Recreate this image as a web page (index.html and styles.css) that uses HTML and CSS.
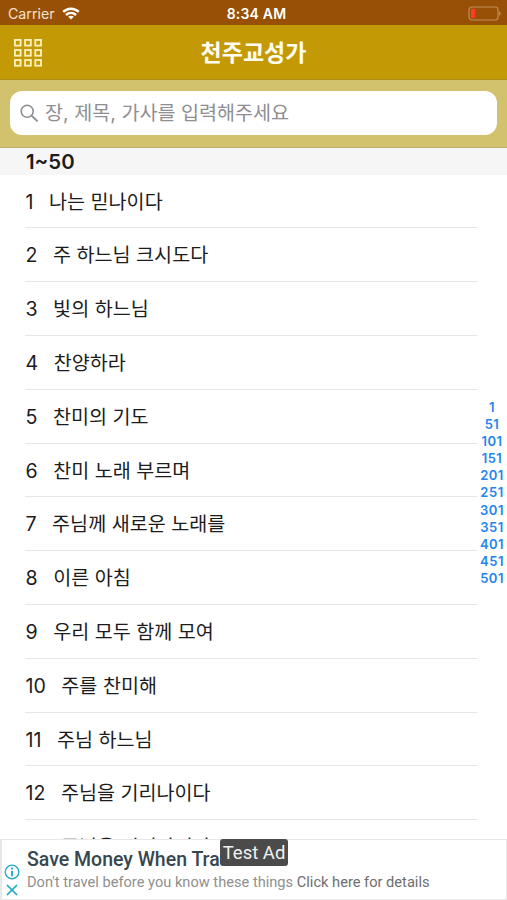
FILE: index.html
```
<!DOCTYPE html>
<html lang="ko">
<head>
  <meta charset="UTF-8">
  <meta name="viewport" content="width=device-width, initial-scale=1.0">
  <title>천주교성가</title>
  <link rel="stylesheet" href="styles.css">
</head>
<body>
  <div class="status-bar">
    <div class="carrier">
      <span>Carrier</span>
      <svg width="18" height="13" viewBox="0 0 18 13" fill="none" stroke="#fff" stroke-width="2.4">
        <path d="M1.2 4.9C5.6.6 12.4.6 16.8 4.9"/>
        <path d="M4 8C6.9 5.3 11.1 5.3 14 8"/>
        <path d="M9 12.6L6.2 9.8C7.8 8.4 10.2 8.4 11.8 9.8Z" fill="#fff" stroke="none"/>
      </svg>
    </div>
    <span class="time">8:34 AM</span>
    <svg class="battery" width="33" height="15" viewBox="0 0 33 15">
      <rect x="1" y="1" width="29" height="13" rx="3" fill="none" stroke="#c08d5c" stroke-width="1.2"/>
      <rect x="3" y="3" width="4.2" height="9" rx="1" fill="#ff3b2a"/>
      <path d="M31 5.3C33.2 6 33.2 9 31 9.7Z" fill="#c08d5c"/>
    </svg>
  </div>

  <header class="nav-bar">
    <svg class="menu" width="28" height="28" viewBox="0 0 28 28" fill="none" stroke="#fff3bd" stroke-width="1.8">
      <rect x="0.9" y="0.9" width="5.7" height="5.7"/>
      <rect x="11.1" y="0.9" width="5.7" height="5.7"/>
      <rect x="21.3" y="0.9" width="5.7" height="5.7"/>
      <rect x="0.9" y="11" width="5.7" height="5.7"/>
      <rect x="11.1" y="11" width="5.7" height="5.7"/>
      <rect x="21.3" y="11" width="5.7" height="5.7"/>
      <rect x="0.9" y="21" width="5.7" height="5.7"/>
      <rect x="11.1" y="21" width="5.7" height="5.7"/>
      <rect x="21.3" y="21" width="5.7" height="5.7"/>
    </svg>
    <h1>천주교성가</h1>
  </header>

  <div class="search-bar">
    <div class="search-field">
      <svg width="19" height="19" viewBox="0 0 19 19" fill="none" stroke="#8e8e93" stroke-width="1.6">
        <circle cx="7.2" cy="7.2" r="6"/>
        <path d="M11.6 11.6L17.6 17.4" stroke-width="2"/>
      </svg>
      <span>장, 제목, 가사를 입력해주세요</span>
    </div>
  </div>

  <main>
    <h2>1~50</h2>
    <ul class="songs">
      <li><span class="no">1</span>나는 믿나이다</li>
      <li><span class="no">2</span>주 하느님 크시도다</li>
      <li><span class="no">3</span>빛의 하느님</li>
      <li><span class="no">4</span>찬양하라</li>
      <li><span class="no">5</span>찬미의 기도</li>
      <li><span class="no">6</span>찬미 노래 부르며</li>
      <li><span class="no">7</span>주님께 새로운 노래를</li>
      <li><span class="no">8</span>이른 아침</li>
      <li><span class="no">9</span>우리 모두 함께 모여</li>
      <li><span class="no">10</span>주를 찬미해</li>
      <li><span class="no">11</span>주님 하느님</li>
      <li><span class="no">12</span>주님을 기리나이다</li>
      <li><span class="no">13</span>주님을 기리나이다</li>
    </ul>
  </main>

  <nav class="index">
    <span>1</span>
    <span>51</span>
    <span>101</span>
    <span>151</span>
    <span>201</span>
    <span>251</span>
    <span>301</span>
    <span>351</span>
    <span>401</span>
    <span>451</span>
    <span>501</span>
  </nav>

  <footer class="ad">
    <div class="ad-icons">
      <svg width="16" height="16" viewBox="0 0 16 16" fill="none" stroke="#1fa9c9" stroke-width="1.3">
        <circle cx="8" cy="8" r="6.8"/>
        <path d="M8 3.6V5.4M8 6.8V12.2" stroke-width="1.8"/>
      </svg>
      <svg width="12" height="12" viewBox="0 0 12 12" fill="none" stroke="#1fa9c9" stroke-width="1.7">
        <path d="M1 1L11 11M11 1L1 11"/>
      </svg>
    </div>
    <div class="ad-text">
      <div class="ad-title">Save Money When Tra</div>
      <div class="ad-desc">Don't travel before you know these things <span>Click here for details</span></div>
    </div>
    <div class="ad-badge">Test Ad</div>
  </footer>
</body>
</html>
```
FILE: styles.css
```
* {
  box-sizing: border-box;
}
body {
  margin: 0;
  height: 900px;
  display: flex;
  flex-direction: column;
  position: relative;
  overflow: hidden;
  background: #fff;
  color: #1c1c1c;
  font-family: Inter, "Noto Sans CJK KR", sans-serif;
}
.status-bar {
  flex: none;
  height: 25px;
  padding: 1px 6px 0 8px;
  display: grid;
  grid-template-columns: 1fr auto 1fr;
  align-items: center;
  background: #984f06;
  color: #fff;
  font-size: 14px;
  line-height: 24px;
}
.carrier {
  display: flex;
  align-items: center;
  gap: 7px;
  color: #f6e3d0;
  font-size: 14.2px;
}
.time {
  padding: 1px 0 0 4px;
  font-weight: 600;
  font-size: 14px;
  letter-spacing: 0.2px;
}
.battery {
  justify-self: end;
}
.nav-bar {
  flex: none;
  height: 55px;
  padding: 0 14px;
  display: grid;
  grid-template-columns: 1fr auto 1fr;
  align-items: center;
  background: #c39a06;
  border-bottom: 1px solid #ab8c20;
}
.nav-bar h1 {
  margin: 0;
  padding-top: 2px;
  color: #fffdf2;
  font-size: 23px;
  font-weight: 700;
  line-height: 53px;
}
.search-bar {
  flex: none;
  height: 68px;
  padding: 11px 10px 0;
  background: #d2c16d;
  border-bottom: 1px solid #bcae6c;
}
.search-field {
  height: 44px;
  padding-left: 10px;
  display: flex;
  align-items: center;
  gap: 6px;
  background: #fff;
  border-radius: 12px;
  color: #8e8e93;
  font-size: 19.6px;
}
.search-field span {
  padding-bottom: 3px;
}
main {
  flex: 1;
  min-height: 0;
  overflow: hidden;
}
h2 {
  height: 27px;
  margin: 0;
  padding-left: 26px;
  background: #f6f6f6;
  font-size: 20.4px;
  font-weight: 600;
  line-height: 28px;
}
.songs {
  margin: -0.4px 30px 0 25px;
  padding: 0;
  list-style: none;
}
.songs li {
  height: 53.8px;
  border-bottom: 1px solid #e6e6e6;
  font-size: 19.6px;
  line-height: 54px;
  white-space: nowrap;
}
.no {
  margin: 0 15.5px 0 0.5px;
}
.index {
  position: absolute;
  top: 399px;
  right: 0;
  width: 30px;
  display: flex;
  flex-direction: column;
  align-items: center;
  color: #2485ee;
  font-size: 13px;
  font-weight: 600;
  letter-spacing: 0.5px;
  line-height: 17.1px;
}
.ad {
  flex: none;
  position: relative;
  height: 61px;
  display: flex;
  border: 2px solid #e8e8e8;
  border-width: 1px 1px 1px 2px;
  background: #fff;
  font-family: Roboto, sans-serif;
}
.ad-icons {
  width: 19px;
  padding-top: 24px;
  display: flex;
  flex-direction: column;
  align-items: center;
  gap: 4px;
}
.ad-text {
  padding: 7px 0 0 6px;
  white-space: nowrap;
}
.ad-title {
  color: #37474f;
  font-size: 19.5px;
  font-weight: 500;
  line-height: 25px;
}
.ad-desc {
  color: #909090;
  font-size: 14.63px;
  line-height: 21px;
}
.ad-desc span {
  color: #6e6e6e;
}
.ad-badge {
  position: absolute;
  top: -1px;
  left: 218px;
  width: 68px;
  height: 27px;
  border-radius: 3px;
  background: #4b4b4b;
  color: #f2f2f2;
  font-size: 18.5px;
  line-height: 28px;
  text-align: center;
}
```
